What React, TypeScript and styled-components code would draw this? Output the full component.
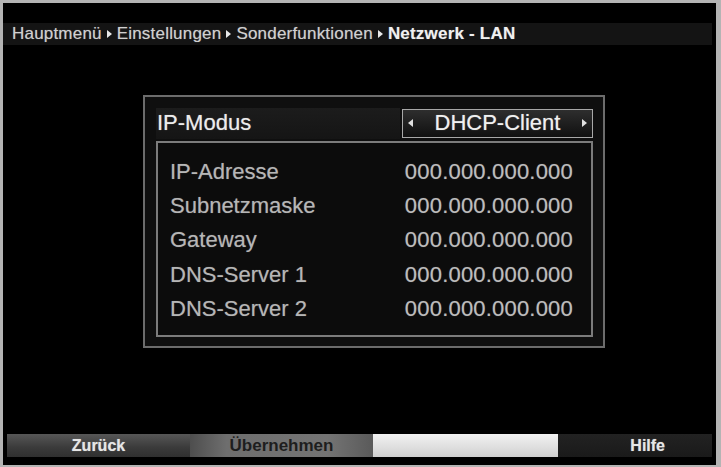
import React from 'react';
import styled, { createGlobalStyle } from 'styled-components';

const GlobalStyle = createGlobalStyle`
    html, body {
        margin: 0;
        padding: 0;
        background: #000;
    }
    body {
        font-family: "Liberation Sans", Arial, sans-serif;
    }
`;

const Screen = styled.div`
    box-sizing: border-box;
    width: 721px;
    height: 467px;
    background: #000;
    border-style: solid;
    border-color: #b4b4b4;
    border-width: 3px 5px 2px 3px;
    display: flex;
    flex-direction: column;
    overflow: hidden;
`;

const Breadcrumb = styled.div`
    margin: 20px 4px 0 0;
    height: 22px;
    background: #141414;
    display: flex;
    align-items: center;
    padding-left: 9px;
    font-size: 17px;
    letter-spacing: 0.2px;
    color: #d8d8d8;
    text-shadow: 0 0 1px rgba(255, 255, 255, 0.4);
    white-space: nowrap;
`;

const Crumb = styled.span<{ $current?: boolean }>`
    font-weight: ${(p) => (p.$current ? 'bold' : 'normal')};
    color: ${(p) => (p.$current ? '#f0f0f0' : '#d0d0d0')};
`;

const Sep = styled.span`
    display: inline-block;
    width: 0;
    height: 0;
    margin: 0 5px 0 5px;
    border-top: 4px solid transparent;
    border-bottom: 4px solid transparent;
    border-left: 5px solid #e8e8e8;
`;

const Panel = styled.div`
    box-sizing: border-box;
    margin: 50px 0 0 140px;
    width: 462px;
    height: 253px;
    border: 2px solid #6c6c6c;
    background: #0f0f0f;
    padding: 11px 10px 9px 11px;
    display: flex;
    flex-direction: column;
`;

const HeaderRow = styled.div`
    display: flex;
    align-items: center;
    height: 32px;
    margin-bottom: 2px;
`;

const HeaderLabel = styled.div`
    flex: 1;
    align-self: stretch;
    display: flex;
    align-items: center;
    padding-left: 1px;
    background: linear-gradient(to bottom, #1c1c1c, #151515);
    font-size: 22px;
    color: #ececec;
    text-shadow: 0 0 1px rgba(255, 255, 255, 0.5);
`;

const Selector = styled.div`
    box-sizing: border-box;
    width: 191px;
    height: 29px;
    margin-left: 2px;
    border: 1.5px solid #a8a8a8;
    background: linear-gradient(to bottom, #2e2e2e, #101010);
    display: flex;
    align-items: center;
    justify-content: space-between;
    padding: 0 5px;
    font-size: 22px;
    color: #f0f0f0;
    text-shadow: 0 0 1px rgba(255, 255, 255, 0.5);
`;

const Arrow = styled.span<{ $dir: 'left' | 'right' }>`
    width: 0;
    height: 0;
    border-top: 4px solid transparent;
    border-bottom: 4px solid transparent;
    ${(p) =>
        p.$dir === 'left'
            ? 'border-right: 5px solid #e0e0e0;'
            : 'border-left: 5px solid #e0e0e0;'}
`;

const InfoBox = styled.div`
    box-sizing: border-box;
    flex: 1;
    border: 2px solid #7c7c7c;
    background: #0c0c0c;
    padding: 12px 18px 9px 12px;
    display: flex;
    flex-direction: column;
`;

const InfoRow = styled.div`
    height: 34.3px;
    display: flex;
    align-items: center;
    justify-content: space-between;
    font-size: 22px;
    text-shadow: 0 0 1px rgba(255, 255, 255, 0.35);
`;

const Label = styled.span`
    color: #b6b6b6;
`;

const Value = styled.span`
    color: #bdbdbd;
    letter-spacing: 0.2px;
`;

const Spacer = styled.div`
    flex: 1;
`;

const Footer = styled.div`
    display: grid;
    grid-template-columns: 183px 183px 185px 1fr;
    height: 23px;
    margin: 0 4px 8px 4px;
`;

type Tone = 'red' | 'green' | 'yellow' | 'blue';

const toneBg: Record<Tone, string> = {
    red: 'linear-gradient(to bottom, #575757, #3a3a3a 60%, #303030)',
    green: 'linear-gradient(to right, #4e4e4e, #6e6e6e 20%, #747474 75%, #5a5a5a)',
    yellow: 'linear-gradient(to bottom, #f2f2f2, #dedede 60%, #cfcfcf)',
    blue: 'linear-gradient(to bottom, #222, #1a1a1a)',
};

const FooterButton = styled.div<{ $tone: Tone }>`
    display: flex;
    align-items: center;
    justify-content: ${(p) => (p.$tone === 'blue' ? 'flex-end' : 'center')};
    padding-right: ${(p) => (p.$tone === 'blue' ? '47px' : '0')};
    background: ${(p) => toneBg[p.$tone]};
    font-size: ${(p) => (p.$tone === 'green' ? '17px' : '16px')};
    font-weight: bold;
    color: ${(p) => (p.$tone === 'green' ? '#1e1e1e' : '#e6e6e6')};
    text-shadow: ${(p) =>
        p.$tone === 'green' ? 'none' : '0 0 1px rgba(255, 255, 255, 0.5)'};
`;

const rows = [
    { label: 'IP-Adresse', value: '000.000.000.000' },
    { label: 'Subnetzmaske', value: '000.000.000.000' },
    { label: 'Gateway', value: '000.000.000.000' },
    { label: 'DNS-Server 1', value: '000.000.000.000' },
    { label: 'DNS-Server 2', value: '000.000.000.000' },
];

const App: React.FC = () => {
    return (
        <>
            <GlobalStyle />
            <Screen>
                <Breadcrumb>
                    <Crumb>Hauptmenü</Crumb>
                    <Sep />
                    <Crumb>Einstellungen</Crumb>
                    <Sep />
                    <Crumb>Sonderfunktionen</Crumb>
                    <Sep />
                    <Crumb $current>Netzwerk - LAN</Crumb>
                </Breadcrumb>

                <Panel>
                    <HeaderRow>
                        <HeaderLabel>IP-Modus</HeaderLabel>
                        <Selector>
                            <Arrow $dir="left" />
                            <span>DHCP-Client</span>
                            <Arrow $dir="right" />
                        </Selector>
                    </HeaderRow>
                    <InfoBox>
                        {rows.map((r) => (
                            <InfoRow key={r.label}>
                                <Label>{r.label}</Label>
                                <Value>{r.value}</Value>
                            </InfoRow>
                        ))}
                    </InfoBox>
                </Panel>

                <Spacer />

                <Footer>
                    <FooterButton $tone="red">Zurück</FooterButton>
                    <FooterButton $tone="green">Übernehmen</FooterButton>
                    <FooterButton $tone="yellow" />
                    <FooterButton $tone="blue">Hilfe</FooterButton>
                </Footer>
            </Screen>
        </>
    );
};

export default App;
